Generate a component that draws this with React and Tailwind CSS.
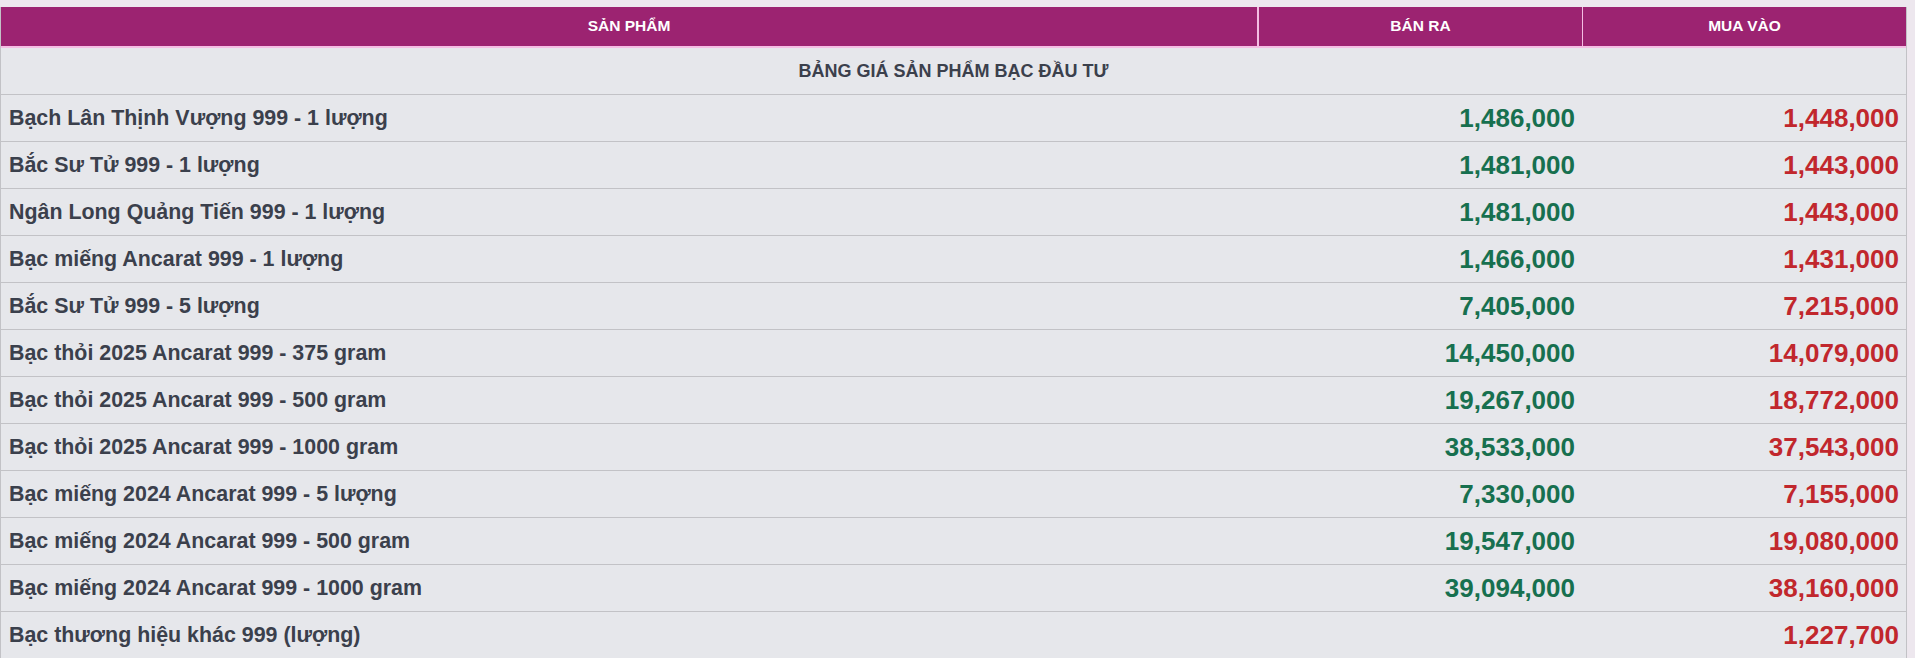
import React from "react";

const rows = [
  ["Bạch Lân Thịnh Vượng 999 - 1 lượng", "1,486,000", "1,448,000"],
  ["Bắc Sư Tử 999 - 1 lượng", "1,481,000", "1,443,000"],
  ["Ngân Long Quảng Tiến 999 - 1 lượng", "1,481,000", "1,443,000"],
  ["Bạc miếng Ancarat 999 - 1 lượng", "1,466,000", "1,431,000"],
  ["Bắc Sư Tử 999 - 5 lượng", "7,405,000", "7,215,000"],
  ["Bạc thỏi 2025 Ancarat 999 - 375 gram", "14,450,000", "14,079,000"],
  ["Bạc thỏi 2025 Ancarat 999 - 500 gram", "19,267,000", "18,772,000"],
  ["Bạc thỏi 2025 Ancarat 999 - 1000 gram", "38,533,000", "37,543,000"],
  ["Bạc miếng 2024 Ancarat 999 - 5 lượng", "7,330,000", "7,155,000"],
  ["Bạc miếng 2024 Ancarat 999 - 500 gram", "19,547,000", "19,080,000"],
  ["Bạc miếng 2024 Ancarat 999 - 1000 gram", "39,094,000", "38,160,000"],
  ["Bạc thương hiệu khác 999 (lượng)", "", "1,227,700"],
];

export default function App() {
  return (
    <div
      className="w-[1915px] h-[658px] overflow-hidden bg-[#ede7ee] pt-[7px]"
      style={{ fontFamily: '"Liberation Sans", Arial, sans-serif' }}
    >
      <div className="w-[1907px] bg-[#e6e7eb] border-r border-l border-[#c2c2c6]">
        <div className="grid grid-cols-[1258px_324px_323px] h-[41px] bg-[#9c2371] border-b-2 border-[#f4bde3] text-white font-bold text-[15.5px]">
          <div className="flex items-center justify-center border-r-2 border-[#f4bde3] pb-[1px]">SẢN PHẨM</div>
          <div className="flex items-center justify-center border-r border-[#f4bde3] pb-[1px]">BÁN RA</div>
          <div className="flex items-center justify-center pb-[1px]">MUA VÀO</div>
        </div>
        <div className="h-[47px] border-b border-[#c2c2c6] flex items-center justify-center text-[18px] font-bold text-[#3b404c]">
          BẢNG GIÁ SẢN PHẨM BẠC ĐẦU TƯ
        </div>
        {rows.map((r, i) => (
          <div
            key={i}
            className="grid grid-cols-[1258px_324px_323px] h-[47px] border-b border-[#c2c2c6] items-center"
          >
            <div className="pl-[8px] text-[21.4px] font-bold text-[#3b404c]">{r[0]}</div>
            <div className="pr-[8px] text-right text-[26px] font-bold text-[#17704f]">{r[1]}</div>
            <div className="pr-[7px] text-right text-[26px] font-bold text-[#c1272d]">{r[2]}</div>
          </div>
        ))}
      </div>
    </div>
  );
}
